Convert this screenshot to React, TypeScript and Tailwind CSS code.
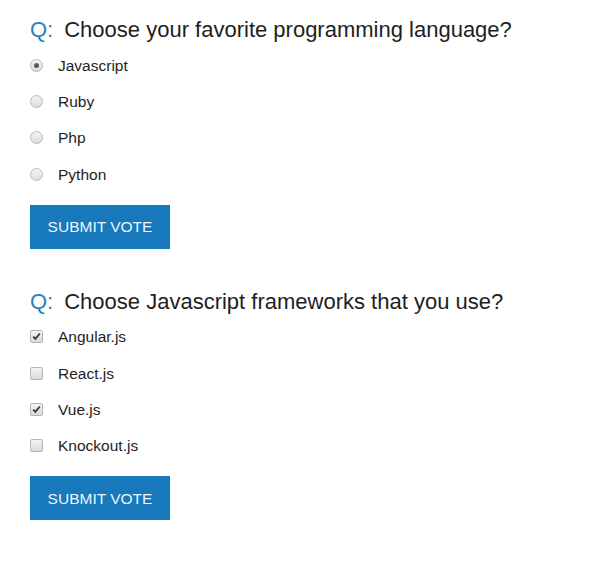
const font = { fontFamily: '"Liberation Sans", Arial, sans-serif' };

type Poll = {
  question: string;
  kind: "radio" | "checkbox";
  options: { label: string; checked: boolean }[];
};

const polls: Poll[] = [
  {
    question: "Choose your favorite programming language?",
    kind: "radio",
    options: [
      { label: "Javascript", checked: true },
      { label: "Ruby", checked: false },
      { label: "Php", checked: false },
      { label: "Python", checked: false },
    ],
  },
  {
    question: "Choose Javascript frameworks that you use?",
    kind: "checkbox",
    options: [
      { label: "Angular.js", checked: true },
      { label: "React.js", checked: false },
      { label: "Vue.js", checked: true },
      { label: "Knockout.js", checked: false },
    ],
  },
];

function Radio({ checked }: { checked: boolean }) {
  return (
    <span className="flex h-[13px] w-[13px] items-center justify-center rounded-full border border-[#b9b9b9] bg-gradient-to-b from-[#f4f4f4] to-[#dcdcdc]">
      {checked && <span className="h-[5px] w-[5px] rounded-full bg-[#5a5a5a]" />}
    </span>
  );
}

function Checkbox({ checked }: { checked: boolean }) {
  return (
    <span className="flex h-[13px] w-[13px] items-center justify-center rounded-[2px] border border-[#b5b5b5] bg-gradient-to-b from-[#f4f4f4] to-[#dadada]">
      {checked && (
        <svg width="9" height="9" viewBox="0 0 9 9">
          <path d="M1.2 4.6 L3.4 6.9 L7.8 1.5" fill="none" stroke="#3a3a3a" strokeWidth="1.9" />
        </svg>
      )}
    </span>
  );
}

function PollForm({ poll }: { poll: Poll }) {
  return (
    <form className="flex flex-col" onSubmit={(e) => e.preventDefault()}>
      <h3 className="flex items-baseline text-[22px] leading-[26px] text-[#1e1e1e]">
        <span className="mr-[11px] text-[#2a7fc2]">Q:</span>
        {poll.question}
      </h3>
      <ul className="mt-[4px] flex flex-col">
        {poll.options.map((o) => (
          <li key={o.label} className="flex h-[36.4px] items-center">
            {poll.kind === "radio" ? <Radio checked={o.checked} /> : <Checkbox checked={o.checked} />}
            <span className="ml-[15px] text-[15.5px] text-[#1e1e1e]">{o.label}</span>
          </li>
        ))}
      </ul>
      <button
        type="submit"
        className="mt-[12px] h-[44px] w-[140px] bg-[#1878bc] text-[15.5px] text-[#eef5fa]"
      >
        SUBMIT VOTE
      </button>
    </form>
  );
}

export default function App() {
  return (
    <div className="min-h-[565px] bg-white pl-[30px] pt-[17px]" style={font}>
      <div className="flex flex-col gap-[40px]">
        {polls.map((p) => (
          <PollForm key={p.question} poll={p} />
        ))}
      </div>
    </div>
  );
}
